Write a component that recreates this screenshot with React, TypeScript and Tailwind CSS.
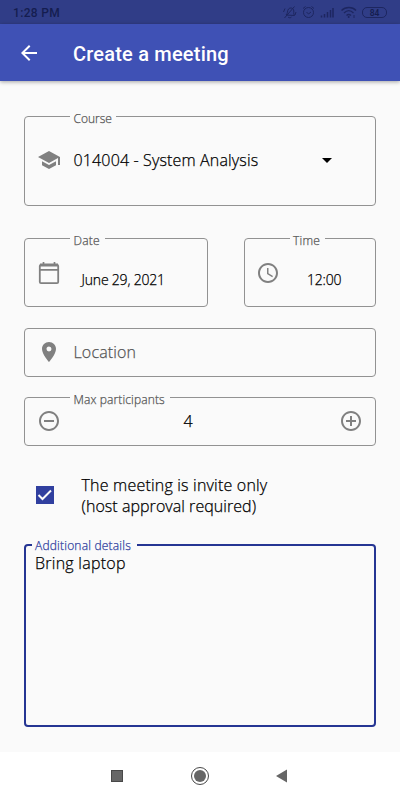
import type { ReactNode } from "react";
import {
    MdAddCircleOutline,
    MdArrowBack,
    MdArrowDropDown,
    MdLocationOn,
    MdOutlineAccessTime,
    MdRemoveCircleOutline,
    MdSchool,
} from "react-icons/md";

type FieldProps = {
    label?: string;
    labelClass?: string;
    className?: string;
    children: ReactNode;
};

function Field({ label, labelClass = "w-[46px]", className = "", children }: FieldProps) {
    return (
        <div className={`relative flex rounded-[4px] border border-[#929292] ${className}`}>
            {label && (
                <span className={`absolute -top-[6px] left-[45px] h-4 whitespace-nowrap bg-[#fafafa] pl-[3.500px] text-[12px] leading-4 text-[#555] ${labelClass}`}>{label}</span>
            )}
            {children}
        </div>
    );
}

function StatusIcons() {
    return (
        <svg width="107" height="16" viewBox="0 0 107 16" fill="none" stroke="#1d2660" strokeWidth="1">
            <path d="M4 11c2-1.500 1-4 2.500-6 1.500-1.600 4-1.300 5 .5.800 2-.5 4 1 6zM6 13c1 1 2.500 1 3.500 0M2.500 14 12.500 2.500M1.500 8 3 4.500M14 8l-1 3" />
            <circle cx="26.500" cy="8.500" r="5" />
            <path d="M21 4.500 23.500 2.500M29.500 2.500 32 4.500M24.500 8l2 2 2.500-2" />
            <path d="M39.500 13.500v-2M42.500 13.500V10M45.500 13.500V8M48.500 13.500V6M51 13.500V4" strokeWidth="1.500" />
            <path d="M59.500 6.500c4-4 11-4 14.500 0M62 9c3-3 6.500-3 9.500 0M64.500 11.500c1.300-1.300 3-1.300 4.500 0" strokeWidth="1.400" />
            <circle cx="66.700" cy="13" r="1" fill="#1d2660" stroke="none" />
            <path d="M72 11v3" />
            <rect x="80.500" y="3.500" width="24" height="10" rx="4.500" />
            <text x="92.500" y="11.500" textAnchor="middle" fontSize="8.500" fontWeight="600" fontFamily="Roboto, sans-serif" fill="#151d50" stroke="none">84</text>
        </svg>
    );
}

function CalendarIcon() {
    return (
        <svg width="24" height="24" viewBox="0 0 24 24" fill="none" stroke="#808080" className="shrink-0">
            <path d="M3 4h18" strokeWidth="3" />
            <rect x="2.800" y="3.800" width="18.400" height="18.400" rx="1.200" strokeWidth="1.800" />
            <path d="M3 8.800h18M6.500 1v3M17.500 1v3" strokeWidth="1.700" />
        </svg>
    );
}

export default function App() {
    return (
        <div className="flex h-[800px] w-[400px] flex-col overflow-hidden bg-[#fafafa] font-['Open_Sans','Noto_Sans',sans-serif] font-light text-black">
            <div className="flex h-6 shrink-0 items-center justify-between bg-[#303d87] pl-[13px] pr-[11.500px]">
                <span className="pt-px font-['Roboto',sans-serif] text-[12px] font-medium tracking-[0.35px] text-[#151d50]">1:28 PM</span>
                <StatusIcons />
            </div>
            <header className="z-10 flex h-[57px] shrink-0 items-center bg-[#3f51b5] pl-[16.500px] text-white shadow-[0_1px_4px_rgba(0,0,0,0.35)]">
                <MdArrowBack size={24} />
                <h1 className="ml-[32.500px] pt-0.5 font-['Roboto',sans-serif] text-[20px] font-medium leading-6 tracking-[0.2px]">Create a meeting</h1>
            </header>

            <main className="flex flex-1 flex-col pl-6 pr-[24.500px] pt-[35px] [-webkit-text-stroke:0.25px_currentColor]">
                <Field label="Course" className="h-[90px] items-center pb-0.5 pl-3">
                    <MdSchool size={24} color="#808080" />
                    <span className="ml-[12.500px] w-[241px] whitespace-nowrap text-[16px] tracking-[0.15px]">014004 - System Analysis</span>
                    <MdArrowDropDown size={24} />
                </Field>

                <div className="mt-8 flex justify-between">
                    <Field label="Date" labelClass="w-[35px] tracking-[0.2px]" className="h-[69px] w-[184px] pl-3">
                        <div className="pt-[22px]"><CalendarIcon /></div>
                        <span className="ml-[20.500px] mt-[30.500px] whitespace-nowrap text-[14px] leading-5 tracking-[-0.2px]">June 29, 2021</span>
                    </Field>
                    <Field label="Time" labelClass="w-[35px] tracking-[0.2px]" className="h-[69px] w-[132px] pl-[11.500px]">
                        <MdOutlineAccessTime size={24} color="#808080" className="mt-[22px]" />
                        <span className="ml-[27px] mt-[30.500px] text-[14px] leading-5 tracking-[-0.2px]">12:00</span>
                    </Field>
                </div>

                <Field className="mt-[21px] h-[49px] items-center pb-px pl-3">
                    <MdLocationOn size={24} color="#808080" />
                    <span className="mb-px ml-[12.500px] text-[16px] tracking-[0.15px] text-[#555]">Location</span>
                </Field>

                <Field label="Max participants" labelClass="w-[100px] tracking-[0.12px]" className="mt-5 h-[49px] items-center justify-between pb-px pl-3 pr-[11.500px]">
                    <MdRemoveCircleOutline size={24} color="#808080" />
                    <span className="mb-px mr-[24px] text-[16px]">4</span>
                    <MdAddCircleOutline size={24} color="#808080" />
                </Field>

                <label className="mt-[29px] flex items-center pl-[12px]">
                    <span className="mb-0.5 flex size-[18px] items-center justify-center bg-[#303f9f]">
                        <svg width="18" height="18" viewBox="0 0 18 18" fill="none" stroke="#fafafa" strokeWidth="2">
                            <path d="m2.500 9 4 4 8.500-8.500" />
                        </svg>
                    </span>
                    <span className="ml-[27.500px] text-[16px] leading-[20.500px] tracking-[0.2px]">
                        The meeting is invite only
                        <br />
                        <span className="tracking-[0.05px]">(host approval required)</span>
                    </span>
                </label>

                <div className="relative mt-[28px] h-[183px] rounded-[4px] border-2 border-[#253593] pl-[9px] pt-[8px] text-[16px] leading-[18px] tracking-[0.25px]">
                    <span className="absolute -top-[6px] left-[6px] h-3 w-[105px] whitespace-nowrap bg-[#fafafa] pl-[3px] text-[12px] leading-3 tracking-[0.2px] text-[#303f9f]">Additional details</span>
                    Bring laptop
                </div>
            </main>

            <nav className="flex h-12 shrink-0 items-center justify-center bg-white">
                <svg width="180" height="20" viewBox="0 0 180 20" fill="#666">
                    <rect x="1.500" y="4.500" width="11" height="11" stroke="#484848" />
                    <circle cx="90" cy="10" r="8.500" fill="none" stroke="#484848" />
                    <circle cx="90" cy="10" r="6" />
                    <path d="M166 10 177 3.500v13z" />
                </svg>
            </nav>
        </div>
    );
}
